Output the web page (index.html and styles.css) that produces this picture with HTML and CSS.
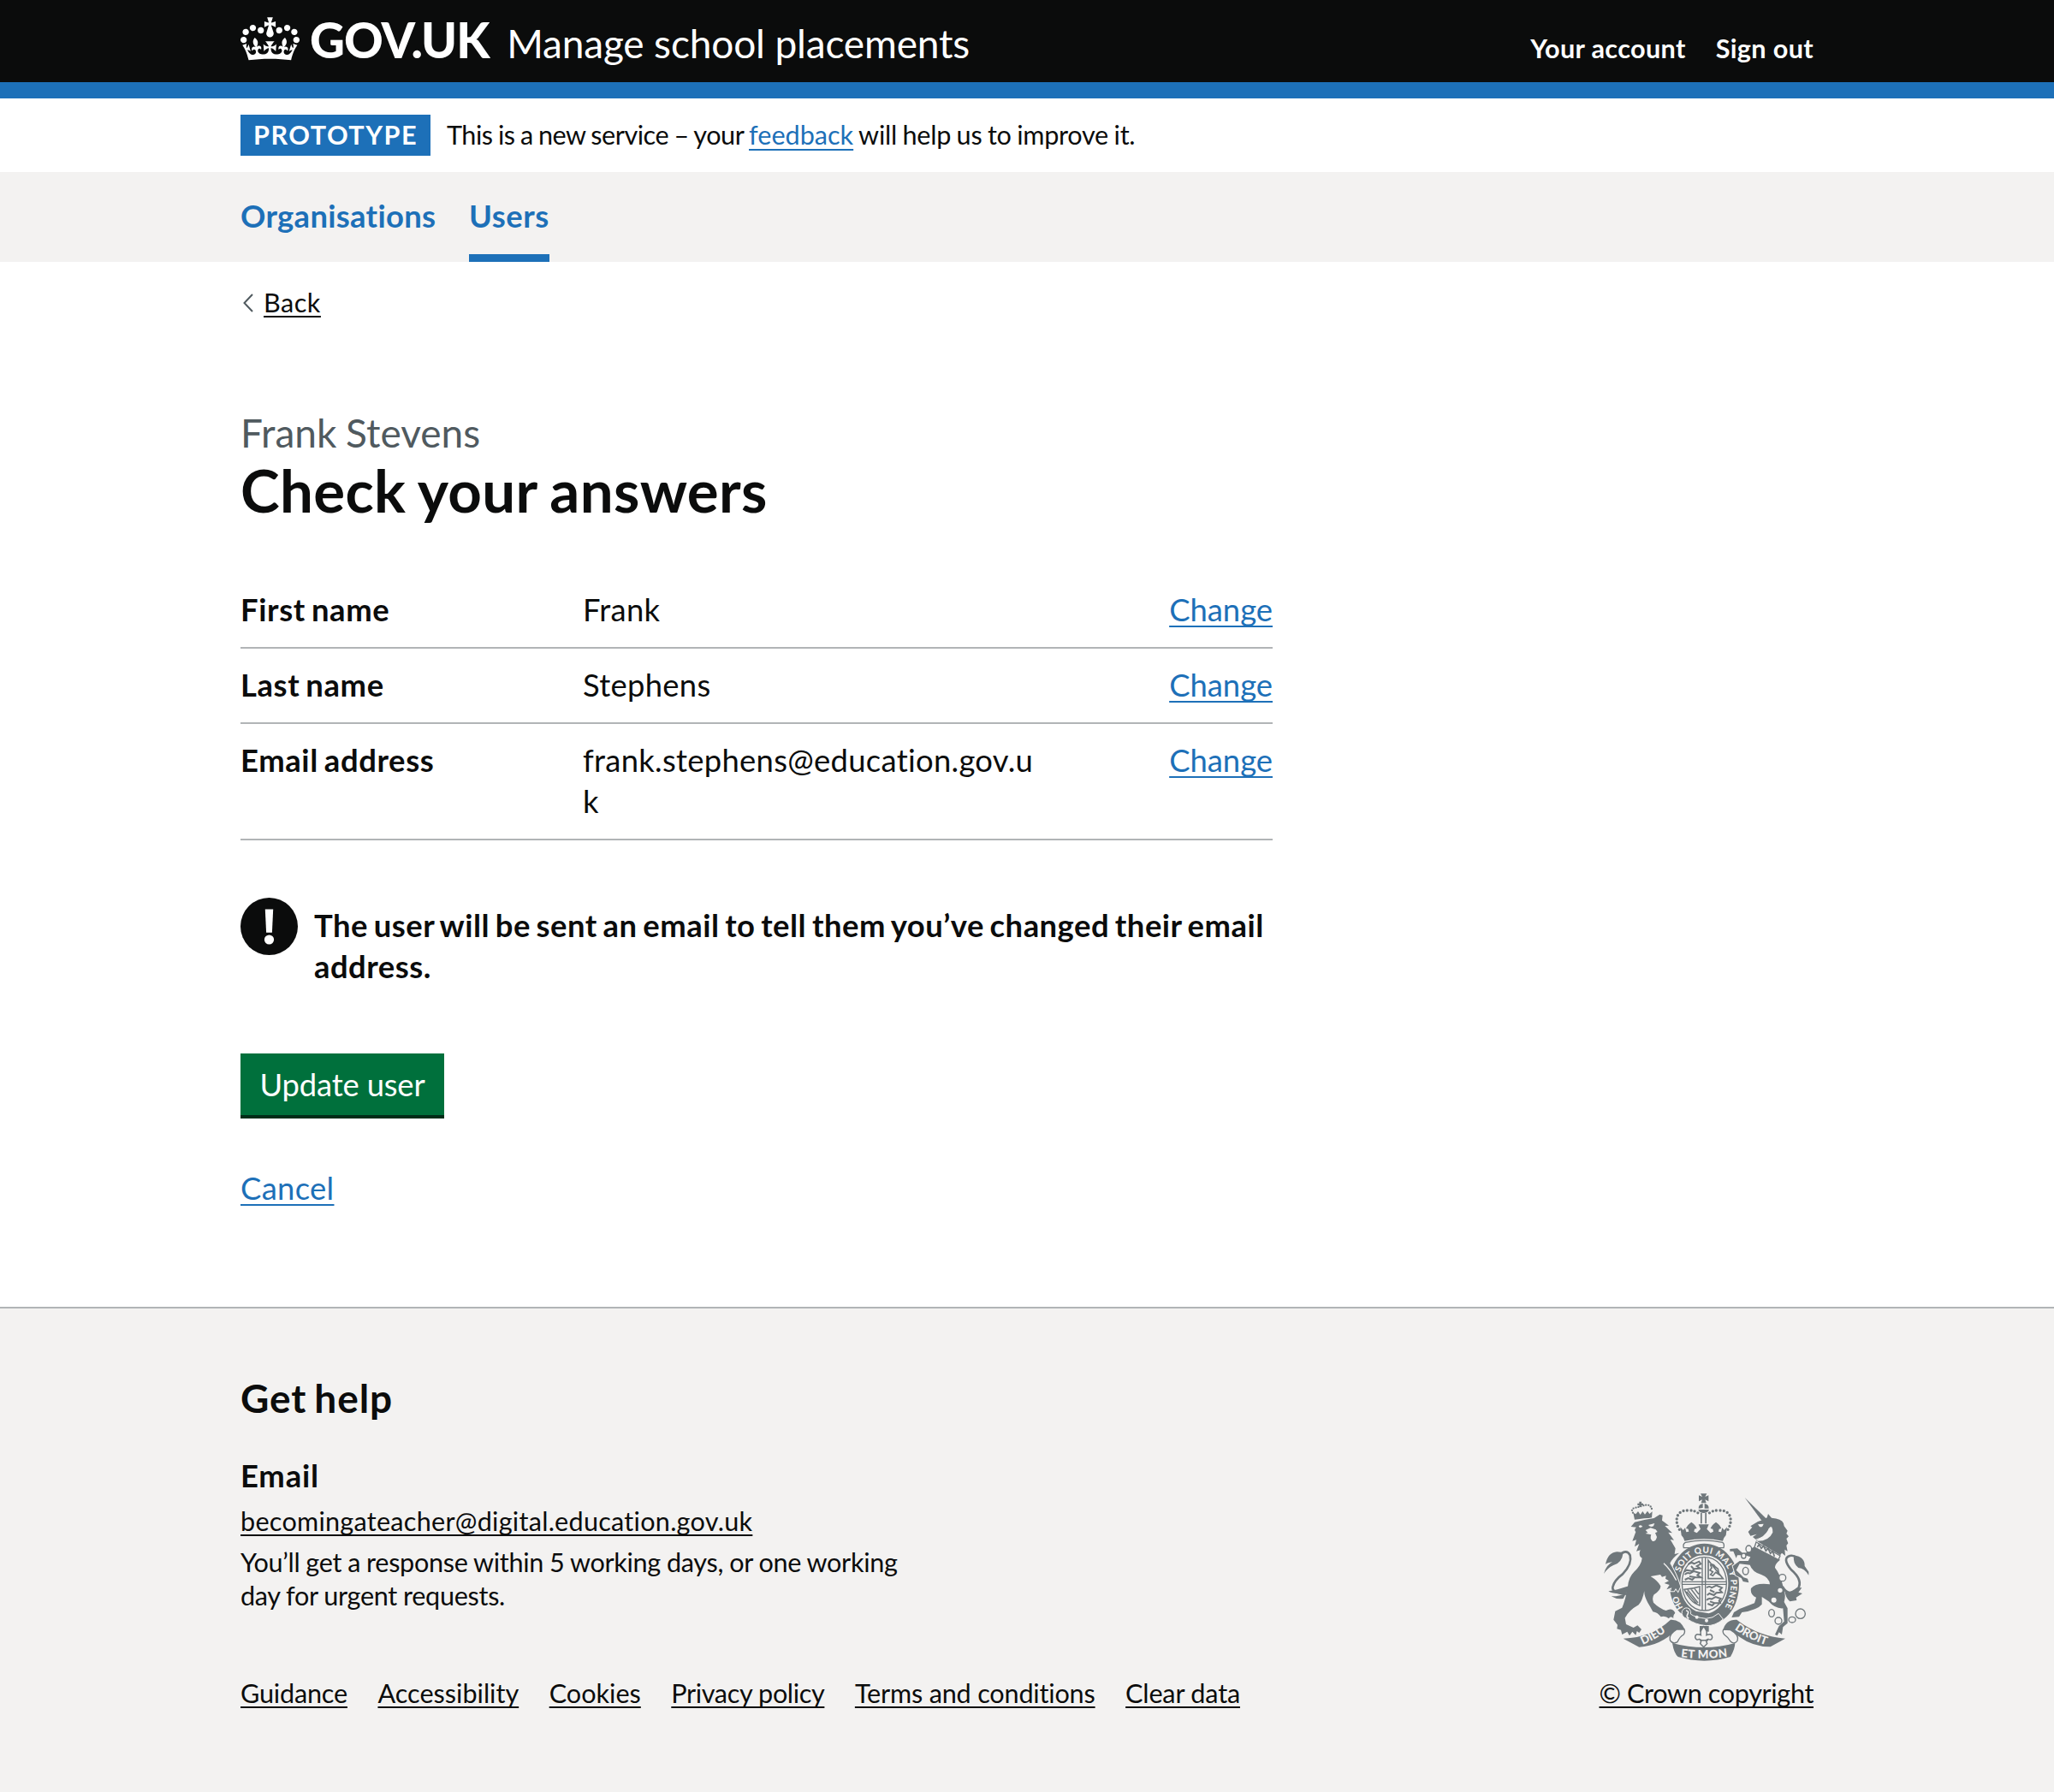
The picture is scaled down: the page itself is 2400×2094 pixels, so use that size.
FILE: index.html
```html
<!DOCTYPE html>
<html lang="en">
<head>
<meta charset="utf-8">
<title>Check your answers - Manage school placements</title>
<link rel="stylesheet" href="styles.css">
</head>
<body>
<header class="header">
  <div class="container header__inner">
    <a class="header__logo" href="#">
      <svg class="header__crown" viewBox="0 0 132 97" fill="currentColor" aria-hidden="true"><path fill-rule="evenodd" d="M25 30.2c3.5 1.5 7.7-.2 9.1-3.7 1.5-3.6-.2-7.8-3.9-9.2-3.6-1.4-7.6.3-9.1 3.9-1.4 3.5.3 7.5 3.9 9zM9 39.5c3.6 1.5 7.8-.2 9.2-3.7 1.5-3.6-.2-7.8-3.9-9.1-3.6-1.5-7.6.2-9.1 3.8-1.4 3.5.3 7.5 3.8 9zM4.4 57.2c3.5 1.5 7.7-.2 9.1-3.8 1.5-3.6-.2-7.7-3.9-9.1-3.5-1.5-7.6.3-9.1 3.8-1.4 3.5.3 7.6 3.9 9.1zm38.3-21.4c3.5 1.5 7.7-.2 9.1-3.8 1.5-3.6-.2-7.7-3.9-9.1-3.6-1.5-7.6.3-9.1 3.8-1.3 3.6.4 7.7 3.9 9.1zm64.4-5.6c-3.6 1.5-7.8-.2-9.1-3.7-1.5-3.6.2-7.8 3.8-9.2 3.6-1.4 7.7.3 9.2 3.9 1.3 3.5-.4 7.5-3.9 9zm15.9 9.3c-3.6 1.5-7.7-.2-9.1-3.7-1.5-3.6.2-7.8 3.7-9.1 3.6-1.5 7.7.2 9.2 3.8 1.5 3.5-.3 7.5-3.8 9zm4.7 17.7c-3.6 1.5-7.8-.2-9.2-3.8-1.5-3.6.2-7.7 3.9-9.1 3.6-1.5 7.7.3 9.2 3.8 1.3 3.5-.4 7.6-3.9 9.1zM89.3 35.8c-3.6 1.5-7.8-.2-9.2-3.8-1.4-3.6.2-7.7 3.9-9.1 3.6-1.5 7.7.3 9.2 3.8 1.4 3.6-.3 7.7-3.9 9.1zM69.7 17.7l8.9 4.7V9.3l-8.9 2.8c-.2-.3-.5-.6-.9-.9L72.4 0H59.6l3.5 11.2c-.3.3-.6.5-.9.9l-8.8-2.8v13.1l8.8-4.7c.3.3.6.7.9.9l-5 15.4v.1c-.2.8-.4 1.6-.4 2.4 0 4.1 3.1 7.5 7 8.1h.2c.3 0 .7.1 1 .1.4 0 .7 0 1-.1h.2c4-.6 7.1-4.1 7.1-8.1 0-.8-.1-1.7-.4-2.4V34l-5.1-15.4c.4-.2.7-.6 1-.9zM66 92.8c16.9 0 32.8 1.1 47.1 3.2 4-16.9 8.9-26.7 14-33.5l-9.6-3.4c1 4.9 1.1 7.2 0 10.2-1.5-1.4-3-4.3-4.2-8.7L108.6 76c2.8-2 5-3.2 7.5-3.3-4.4 9.4-10 11.9-13.6 11.2-4.3-.8-6.3-4.6-5.6-7.9 1-4.7 5.7-5.9 8-.5 4.3-8.7-3-11.4-7.6-8.8 7.1-7.2 7.9-13.5 2.1-21.1-8 6.1-8.1 12.3-4.5 20.8-4.7-5.4-12.1-2.5-9.5 6.2 3.4-5.2 7.9-2 7.2 3.1-.6 4.3-6.4 7.8-13.5 7.2-10.3-.9-10.9-8-11.2-13.8 2.5-.5 7.1 1.8 11 7.3L80.2 60c-4.1 4.4-8 5.3-12.3 5.4 1.4-4.4 8-11.6 8-11.6H55.5s6.4 7.2 7.9 11.6c-4.2-.1-8-1-12.3-5.4l1.4 16.4c3.9-5.5 8.5-7.7 10.9-7.3-.3 5.8-.9 12.8-11.1 13.8-7.2.6-12.9-2.9-13.5-7.2-.7-5 3.8-8.3 7.1-3.1 2.7-8.7-4.6-11.6-9.4-6.2 3.7-8.5 3.6-14.7-4.6-20.8-5.8 7.6-5 13.9 2.2 21.1-4.7-2.6-11.9.1-7.7 8.8 2.3-5.5 7.1-4.2 8.1.5.7 3.3-1.3 7.1-5.7 7.9-3.5.7-9-1.8-13.5-11.2 2.5.1 4.7 1.3 7.5 3.3l-4.7-15.4c-1.2 4.4-2.7 7.2-4.3 8.7-1.1-3-.9-5.3 0-10.2l-9.5 3.4c5 6.9 9.9 16.7 14 33.5 14.8-2.1 30.8-3.2 47.7-3.2z"/></svg>
      <span class="header__logotype">GOV.UK</span>
    </a>
    <a class="header__service" href="#">Manage school placements</a>
    <nav class="header__nav">
      <a href="#">Your account</a>
      <a href="#">Sign out</a>
    </nav>
  </div>
</header>

<div class="container phase-banner">
  <strong class="phase-banner__tag">PROTOTYPE</strong>
  <span class="phase-banner__text">This is a new service – your <a class="link phase-banner__link" href="#">feedback</a><span class="phase-banner__rest"> will help us to improve it.</span></span>
</div>

<nav class="primary-nav">
  <div class="container primary-nav__list">
    <a class="primary-nav__link" href="#">Organisations</a>
    <a class="primary-nav__link primary-nav__link--current" href="#">Users</a>
  </div>
</nav>

<div class="container">
  <a class="back-link" href="#">
    <svg class="back-link__chevron" viewBox="0 0 12 22" aria-hidden="true"><path d="M11 1 1.5 11 11 21" fill="none" stroke="#505a5f" stroke-width="2"/></svg>
    <span class="back-link__text">Back</span>
  </a>

  <main class="main">
    <span class="caption">Frank Stevens</span>
    <h1 class="heading">Check your answers</h1>

    <dl class="summary">
      <div class="summary__row">
        <dt>First name</dt><dd>Frank</dd>
        <dd class="summary__action"><a class="link" href="#">Change</a></dd>
      </div>
      <div class="summary__row">
        <dt>Last name</dt><dd>Stephens</dd>
        <dd class="summary__action"><a class="link" href="#">Change</a></dd>
      </div>
      <div class="summary__row">
        <dt>Email address</dt><dd>frank.stephens@education.gov.uk</dd>
        <dd class="summary__action"><a class="link" href="#">Change</a></dd>
      </div>
    </dl>

    <div class="warning">
      <svg class="warning__icon" viewBox="0 0 67 67" aria-hidden="true">
        <circle cx="33.5" cy="33.5" r="33.5" fill="#0b0c0c"/>
        <path d="M28.8 13.5h9.4l-1.3 27.3h-6.8z" fill="#fff"/>
        <circle cx="33.5" cy="49" r="5.6" fill="#fff"/>
      </svg>
      <strong class="warning__text">The user will be sent an email to tell them you’ve changed their email address.</strong>
    </div>

    <button class="button" type="submit">Update user</button>
    <p class="cancel"><a class="link" href="#">Cancel</a></p>
  </main>
</div>

<footer class="footer">
  <div class="container footer__meta">
    <div class="footer__content">
      <h2 class="footer__title">Get help</h2>
      <h3 class="footer__subtitle">Email</h3>
      <a class="footer__link footer__email" href="#">becomingateacher@digital.education.gov.uk</a>
      <p class="footer__text">You’ll get a response within 5 working days, or one working day for urgent requests.</p>
      <div class="footer__links">
        <a class="footer__link footer__link--tight" href="#">Guidance</a>
        <a class="footer__link" href="#">Accessibility</a>
        <a class="footer__link" href="#">Cookies</a>
        <a class="footer__link footer__link--tighter" href="#">Privacy policy</a>
        <a class="footer__link footer__link--tight" href="#">Terms and conditions</a>
        <a class="footer__link footer__link--tight" href="#">Clear data</a>
      </div>
    </div>
    <div class="footer__copyright">
      <svg class="arms" viewBox="72 42 720 594" aria-hidden="true">
        <defs>
          <path id="honi" d="M350 446Q335 424 331 394"/>
          <path id="motto" d="M340 322C352 282 386 254 424 254C480 254 517 305 517 362C517 400 504 435 484 466"/>
          <path id="dieu" d="M208 576Q264 552 304 518"/>
          <path id="mon" d="M334 618Q424 630 516 616"/>
          <path id="droit" d="M527 520Q576 556 646 578"/>
        </defs>
        <!-- royal crown -->
        <g fill="#6f777b">
          <path d="M411 46h22l-6 11 12-5v21l-12-6 4 12h-18l4-12-12 6V52l12 5zM404 98a18 17 0 0 1 15-17v15zM425 81a18 17 0 0 1 15 17h-15zM403 102h38q-4 12-19 12t-19-12z"/>
          <path d="M411 114h5v37h-5zM427 114h5v37h-5z"/>
          <path d="M340 163 350 174 357 166 361 181 370 179 368 170 360 168Q364 156 379 146 394 156 398 168L390 170 388 179 398 184 411 170 404 154H440L433 170 446 184 456 179 454 170 446 168Q450 156 465 146 480 156 484 168L476 170 474 179 483 181 487 166 494 174 504 163 500 192Q490 202 489 212 424 198 355 212 354 202 344 192z"/>
        </g>
        <path d="M337 172C318 140 327 104 365 105Q395 103 408 120M507 172C526 140 517 104 479 105Q449 103 436 120" fill="none" stroke="#6f777b" stroke-width="10" stroke-linecap="round" stroke-dasharray="0 13"/>
        <path d="M358 217Q424 204 488 217 496 222 492 236H352Q348 222 358 217z" fill="#f3f2f1" stroke="#6f777b" stroke-width="4"/>

        <!-- garter and shield -->
        <path fill-rule="evenodd" fill="#6f777b" d="M424 221C355 221 302 285 302 362C302 400 315 436 338 462L372 484L440 506C505 498 546 440 546 362C546 285 493 221 424 221zM424 262C474 262 508 302 508 360C508 415 478 455 440 466L395 458C360 440 340 405 340 360C340 302 374 262 424 262z"/>
        <g class="arms__motto">
          <text><textPath href="#honi" textLength="46">HO</textPath></text>
          <text><textPath href="#motto" textLength="360">SOIT QUI MAL Y PENSE</textPath></text>
        </g>
        <path d="M424 269C470 269 502 308 502 360S470 456 424 456 346 412 346 360 378 269 424 269z" fill="#f3f2f1" stroke="#6f777b" stroke-width="4"/>
        <path d="M417 271v184M428 271v184M347 355h154M347 364h154" fill="none" stroke="#6f777b" stroke-width="4"/>
        <path d="M368 294q10-10 20-2l18-8 6 8-14 8 12 8-20 2-8 8-20-4-8 6M356 330q8-10 18-4l14-8 20 6-8 8 12 8-22 0-8 8-14-6-12 6M378 300l12 14M372 336l22 4" fill="none" stroke="#6f777b" stroke-width="6"/>
        <path d="M432 376q10-8 18 0l16-8 20 8-8 8 8 8-20 2-8 8-16-6-8 6M432 420q8-10 18-4l14-8 18 6-6 8 4 8-20 0-8 8-16-6M444 384l16 8M444 424l18 6" fill="none" stroke="#6f777b" stroke-width="6"/>
        <path d="M438 280 490 344H438zM446 296q10-6 16 6l10 8 4 20-12-8-10 12-8-4 8-10-10-6 6-8z" fill="none" stroke="#6f777b" stroke-width="5"/>
        <path d="M354 382q28-2 54-10v66q-20-6-32-22-14-16-22-34zM366 383l36 46M378 381l26 34M390 379l15 20M362 389l38 46" fill="none" stroke="#6f777b" stroke-width="4.500"/>
        <path d="M346 458q10-18 26-8 8 12 4 18 16 12 54 16 24 0 44-18l16 20q-26 24-60 23-38-4-66-24-22-8-18-27z" fill="#6f777b" stroke="#f3f2f1" stroke-width="3"/>
        <path d="M360 456q12 2 6 12t4 16" fill="none" stroke="#f3f2f1" stroke-width="5"/>
        <circle cx="398" cy="479" r="6" fill="#f3f2f1"/><circle cx="432" cy="491" r="6" fill="#f3f2f1"/>

        <!-- lion -->
        <g fill="#6f777b">
          <path d="M180 137l-5-24 9 5 8-10 8 12 8-12 8 11 9-12 7 10 10-8-2 22q-24 0-60 6z"/>
          <path d="M180 120Q160 100 184 95L204 90Q240 76 241 108" fill="none" stroke="#6f777b" stroke-width="7" stroke-linecap="round" stroke-dasharray="0 9"/>
          <path d="M196 74h8v6h6v7h-6v6h-8v-6h-6v-7h6z"/>
          <path class="arms__beast" d="M167 162 180 146 214 138 248 132 268 119 278 122 276 140 300 158 286 159 312 184 298 182 318 209 305 207 323 238 320 258 336 254Q312 272 304 290Q328 330 340 372L332 389 324 378 318 388 306 388 310 376 292 382 302 366 284 360 300 352 288 344 290 334 276 338 270 330 236 336Q262 352 271 370 272 384 248 400 240 410 246 428 266 448 290 456 312 444 322 464 314 472 316 483 304 474 300 484 288 473 272 478 260 462 244 460 236 444 226 428 212 402 214 386 208 420 194 436Q160 455 146 482L150 504 176 516 190 508 204 522 196 534 188 528 184 542 172 530 162 544 154 530 136 540 132 524 118 520 120 506 106 488 112 458 136 446Q148 418 156 372 158 340 178 320 204 296 206 272 192 264 200 244L186 248 196 222 180 232 186 208 172 212 184 180Q176 172 186 164z"/>
          <path d="M158 398Q100 396 103 374 108 350 138 328 172 292 164 262 152 238 126 262" fill="none" stroke="#6f777b" stroke-width="8"/>
          <path d="M72 327Q80 296 102 286 84 288 78 294 86 252 118 250L140 252Q136 290 104 298 84 308 72 327zM88 388q20 14 66 4l10-24-44 14q-18 4-32 6zM98 406q34 0 54-14l-12 22q-22 4-42-8z"/>
        </g>
        <path d="M194 160q8-8 14 2l-10 4zM228 156l22-6-4 10q-10 6-18-4zM218 174l18-8 18 6 6 8-8 4 6 14q-4 18-16 14-10-8-4-22l-20-4 8-4z" fill="#f3f2f1"/>
        <path d="M282 290Q306 312 326 350" fill="none" stroke="#f3f2f1" stroke-width="4"/>

        <!-- unicorn -->
        <g fill="#6f777b">
          <path d="M566 60 642 134 626 142z"/>
          <path d="M612 144 630 138 644 130 648 117 660 131Q704 134 704 160L716 176 712 186 720 196 712 204 718 220 712 228 716 248 706 242 708 264 696 254 690 262 604 210 640 196Q666 176 656 162L650 170Q634 200 604 206L594 198 608 188 586 194 578 180 592 164 586 160z"/>
          <path class="arms__beast" d="M602 232 690 278Q670 294 672 306 690 328 700 370 712 400 704 426L716 448 716 500 700 514 696 540 686 532 680 544 672 540 686 510 704 494 700 448Q672 450 650 424L626 408 626 434Q610 454 556 462L546 478 520 480 528 462 548 450 600 430 606 410Q584 400 588 378 604 358 654 364 652 340 624 330 592 320 584 296L548 292 536 314 562 340 576 344 580 358 560 354 554 342 534 332 524 300 548 282 578 282 586 268 566 262 540 262 536 272 526 248 514 248 514 240 540 238 560 256 582 250 592 236z"/>
          <path d="M698 372Q720 410 752 380 772 350 728 312 696 272 724 264 742 260 752 280" fill="none" stroke="#6f777b" stroke-width="8"/>
          <path d="M738 262Q778 268 776 300L790 320 790 332Q776 308 754 306 734 292 738 262zM706 384q14 16 42-8l18 0-12 16 14 4-22 14 2 10-24 4q-16-14-18-40z"/>
        </g>
        <path d="M606 216 690 264 684 278 600 234z" fill="#f3f2f1" stroke="#6f777b" stroke-width="4"/>
        <path d="M610 234l6-10 8 14 8-9 8 18 8-9 8 18 8-8 6 18" fill="none" stroke="#6f777b" stroke-width="5"/>
        <path d="M612 154l20-2q-4 14-14 10zM650 168q-2 26-32 34l-12 10q44 2 58-30 0-14-4-20z" fill="#f3f2f1"/>
        <g fill="#f3f2f1" stroke="#6f777b" stroke-width="4">
          <ellipse cx="580" cy="240" rx="10" ry="12"/><ellipse cx="562" cy="264" rx="8" ry="9"/><ellipse cx="569" cy="317" rx="10" ry="13"/>
          <circle cx="698" cy="341" r="12"/><circle cx="690" cy="385" r="10"/><circle cx="668" cy="419" r="11"/>
          <ellipse cx="660" cy="465" rx="10" ry="13"/><circle cx="684" cy="492" r="12"/><ellipse cx="732" cy="488" rx="12" ry="10"/><circle cx="761" cy="467" r="17"/>
        </g>

        <!-- ribbons -->
        <path d="M140 554Q240 550 306 488 340 486 356 522L328 522Q270 580 196 584zM708 554Q610 545 538 488 500 486 490 524L518 524Q580 584 656 583z" fill="#6f777b"/>
        <path d="M328 522Q298 540 304 560 314 576 330 566 338 548 352 540 358 530 354 522zM516 524Q548 542 540 562 528 576 516 564 506 548 494 540 486 530 492 522z" fill="#f3f2f1" stroke="#6f777b" stroke-width="4"/>
        <path d="M312 570Q424 600 532 570 532 590 516 618 424 646 332 618 318 606 312 570z" fill="#6f777b"/>
        <g class="arms__ribbon">
          <text><textPath href="#dieu" textLength="94">DIEU</textPath></text>
          <text><textPath href="#mon" startOffset="8" textLength="164">ET MON</textPath></text>
          <text><textPath href="#droit" startOffset="3" textLength="124">DROIT</textPath></text>
        </g>
        <path d="M408 510h32v20h-32z" fill="#6f777b"/>
        <path d="M422 512q-14 14-10 30-20-8-20 8 4 12 14 6l8 4-4 12 12 12 12-12-4-12 8-4q12 6 14-6 0-16-20-8 4-16-10-30zM408 560h30" fill="#f3f2f1" stroke="#6f777b" stroke-width="4.500"/>
      </svg>
      <a class="footer__link footer__link--tighter" href="#">© Crown copyright</a>
    </div>
  </div>
</footer>
</body>
</html>
```
FILE: styles.css
```css
* {
  box-sizing: border-box;
}

body {
  margin: 0;
  color: #0b0c0c;
  background: #fff;
  font-family: Lato, "Liberation Sans", sans-serif;
  font-size: 36.4px;
  line-height: 48px;
}

h1, h2, h3, p, dl, dd {
  margin: 0;
}

.container {
  width: 1838px;
  margin: 0 auto;
}

.link {
  color: #1d70b8;
  text-decoration: underline;
  text-decoration-thickness: 2px;
  text-underline-offset: 5px;
  text-decoration-skip-ink: none;
}

/* Header */
.header {
  height: 115px;
  background: #0b0c0c;
  border-bottom: 19px solid #1d70b8;
}

.header__inner {
  display: flex;
  align-items: baseline;
  height: 96px;
}

.header a {
  color: #fff;
  text-decoration: none;
}

.header__logo {
  display: flex;
  align-items: baseline;
  gap: 12px;
}

.header__crown {
  align-self: flex-start;
  width: 69px;
  height: 51px;
  margin-top: 20px;
}

.header__logotype {
  font-size: 56.500px;
  font-weight: 900;
  line-height: 93px;
  letter-spacing: -0.900px;
}

.header__service {
  margin-left: 20.500px;
  font-size: 46px;
  letter-spacing: -0.150px;
}

.header__nav {
  display: flex;
  gap: 35px;
  margin-left: auto;
  font-size: 30.600px;
  font-weight: 700;
  letter-spacing: 0.350px;
}

/* Phase banner */
.phase-banner {
  display: flex;
  align-items: center;
  gap: 19px;
  height: 86px;
  font-size: 30.600px;
}

.phase-banner__tag {
  width: 222px;
  height: 48px;
  padding-left: 15px;
  color: #fff;
  background: #1d70b8;
  line-height: 48px;
  letter-spacing: 1.500px;
}

.phase-banner__text {
  padding-bottom: 1px;
  letter-spacing: -0.480px;
  word-spacing: -1px;
}

.phase-banner__link {
  letter-spacing: 0;
}

.phase-banner__rest {
  letter-spacing: -0.260px;
}

/* Primary navigation */
.primary-nav {
  background: #f3f2f1;
}

.primary-nav__list {
  display: flex;
  gap: 38.500px;
}

.primary-nav__link {
  height: 105px;
  color: #1d70b8;
  font-weight: 700;
  line-height: 103px;
  letter-spacing: 0.310px;
  text-decoration: none;
}

.primary-nav__link--current {
  letter-spacing: 0.560px;
  box-shadow: inset 0 -9px #1d70b8;
}

/* Back link */
.back-link {
  display: flex;
  align-items: center;
  gap: 12px;
  width: max-content;
  margin-top: 29px;
  padding-left: 3px;
  color: #0b0c0c;
  font-size: 30.600px;
  line-height: 38px;
  text-decoration: none;
}

.back-link__chevron {
  width: 12px;
  height: 22px;
}

.back-link__text {
  letter-spacing: 0.500px;
  text-decoration: underline;
  text-decoration-thickness: 2px;
  text-underline-offset: 4px;
}

/* Main content */
.main {
  width: 1206px;
  padding: 104px 0 115px;
}

.caption {
  display: block;
  color: #505a5f;
  font-size: 46px;
  line-height: 57px;
  word-spacing: -1px;
}

.heading {
  margin-top: 3px;
  font-size: 69px;
  line-height: 72px;
  letter-spacing: 0.350px;
  word-spacing: -2px;
}

.summary {
  margin-top: 61px;
}

.summary__row {
  display: grid;
  grid-template-columns: 400px 530px 1fr;
  padding: 18px 0 20px;
  border-bottom: 2px solid #b1b4b6;
}

.summary__row dt {
  font-weight: 700;
  letter-spacing: 0.620px;
  word-spacing: -2.500px;
}

.summary__row dd {
  letter-spacing: 0.300px;
  overflow-wrap: anywhere;
}

.summary__row .summary__action {
  letter-spacing: 0;
  text-align: right;
}

.warning {
  display: flex;
  gap: 19px;
  height: 182px;
  margin-top: 67px;
}

.warning__icon {
  flex: none;
  width: 67px;
  height: 67px;
}

.warning__text {
  padding-top: 8px;
  letter-spacing: 0.500px;
  word-spacing: -2.600px;
}

.button {
  display: block;
  width: 238px;
  height: 76px;
  padding: 0;
  color: #fff;
  background: #00703c;
  border: 0;
  border-bottom: 4px solid #002d18;
  font: inherit;
  line-height: 72px;
  letter-spacing: -0.170px;
}

.cancel {
  margin-top: 57px;
  letter-spacing: 0.320px;
}

/* Footer */
.footer {
  background: #f3f2f1;
  border-top: 2px solid #b1b4b6;
  padding: 76px 0 96px;
}

.footer__meta {
  display: flex;
  align-items: flex-end;
  justify-content: space-between;
  font-size: 30.600px;
  line-height: 38.300px;
}

.footer__title {
  font-size: 46px;
  line-height: 57px;
  letter-spacing: 0.900px;
  word-spacing: -3px;
}

.footer__subtitle {
  margin: 38px 0 11px;
  font-size: 36.400px;
  line-height: 48px;
  letter-spacing: 0.850px;
}

.footer__link {
  color: #0b0c0c;
  text-decoration: underline;
  text-decoration-thickness: 2px;
  text-underline-offset: 4px;
  text-decoration-skip-ink: none;
}

.footer__link--tight {
  letter-spacing: -0.180px;
}

.footer__link--tighter {
  letter-spacing: -0.360px;
}

.footer__email {
  display: block;
  width: max-content;
  letter-spacing: 0.260px;
}

.footer__text {
  width: 780px;
  margin-top: 10px;
  letter-spacing: -0.300px;
  word-spacing: -0.500px;
}

.footer__links {
  display: flex;
  gap: 35.500px;
  margin-top: 76px;
}

.footer__copyright {
  display: flex;
  flex-direction: column;
  align-items: center;
  gap: 18px;
}

.arms {
  width: 240px;
  height: 198px;
}

.arms__beast {
  stroke: #f3f2f1;
  stroke-width: 6px;
  paint-order: stroke;
}

.arms__motto,
.arms__ribbon {
  fill: #f3f2f1;
  font-family: Lato, "Liberation Sans", sans-serif;
  font-weight: 900;
}

.arms__motto {
  font-size: 30px;
}

.arms__ribbon {
  font-size: 40px;
}
```
